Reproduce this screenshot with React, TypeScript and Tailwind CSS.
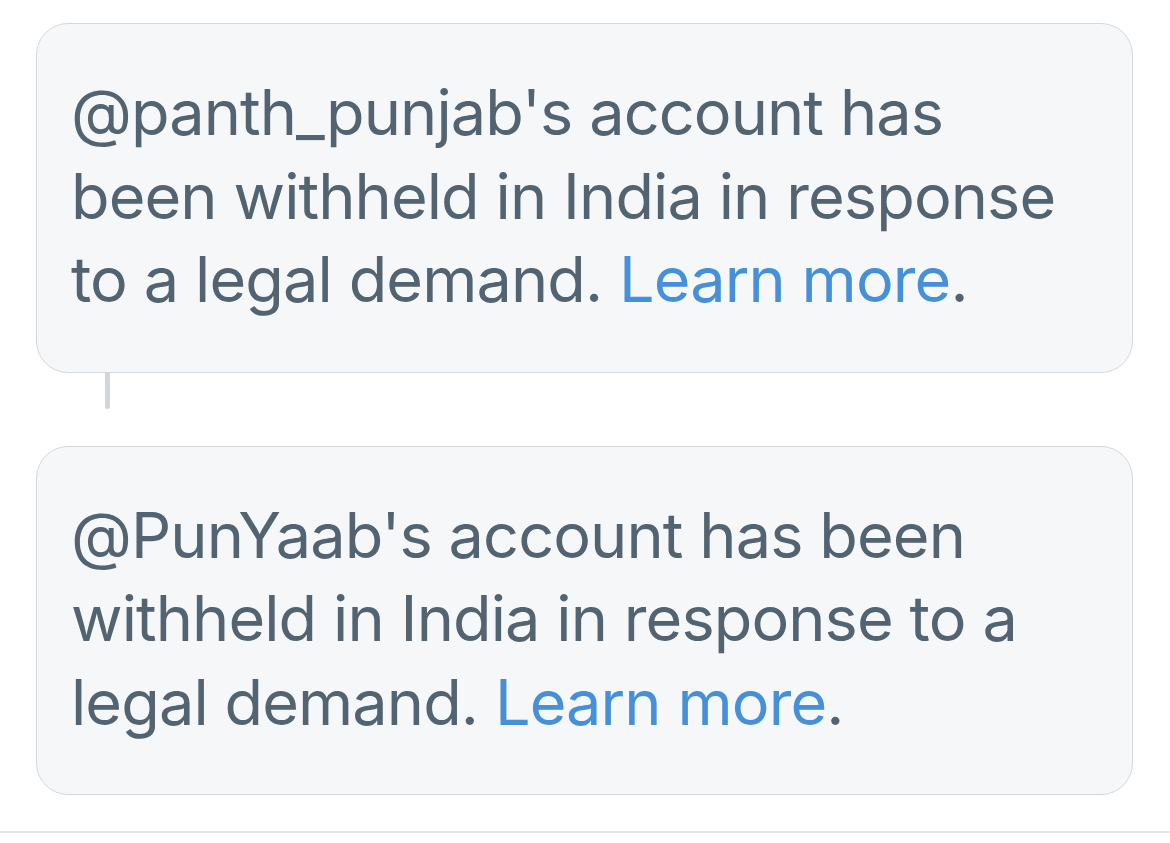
const Notice = ({ handle }: { handle: string }) => (
  <div className="rounded-[32px] border border-[#d3d8dc] bg-[#f6f7f9] pl-[34px] pr-[30px] pt-[47px] pb-[50px] text-[#526371] text-[63px] leading-[83.5px] tracking-[-0.9px]">
    @{handle}'s account has been withheld in India in response to a legal demand.{" "}
    <span className="text-[#4590d8]">Learn more</span>.
  </div>
);

export default function App() {
  return (
    <div
      className="min-h-[843px] w-[1170px] bg-white pt-[23px] flex flex-col"
      style={{ fontFamily: "Inter, 'Noto Sans', sans-serif" }}
    >
      <div className="ml-[36px] mr-[37px] flex flex-col">
        <Notice handle="panth_punjab" />
        {/* thread connector between the two notices */}
        <div className="ml-[69px] h-[36px] w-[5px] rounded-b-[2px] bg-[#d1d6da]" />
        <div className="h-[37px]" />
        <Notice handle="PunYaab" />
      </div>
      <div className="mt-[36px] h-[2px] w-full bg-[#e3e5e7]" />
    </div>
  );
}
